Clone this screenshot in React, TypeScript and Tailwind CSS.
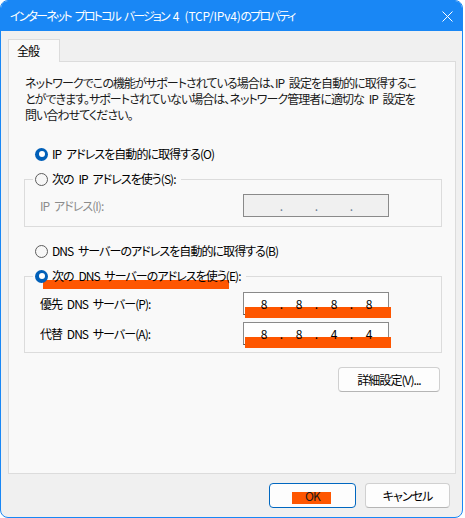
import React from "react";

const font = "font-['Noto_Sans_CJK_JP','Noto_Sans',sans-serif] [font-feature-settings:'palt']";

const Radio = ({ on }: { on?: boolean }) =>
  on ? (
    <span className="w-[13px] h-[13px] rounded-full bg-[#005fb8] flex items-center justify-center shrink-0">
      <span className="w-[6px] h-[6px] rounded-full bg-white" />
    </span>
  ) : (
    <span className="w-[13px] h-[13px] rounded-full border border-[#5d5d5d] bg-[#f7f7f7] shrink-0" />
  );

const IpBox = ({ values, disabled, mark }: { values: string[]; disabled?: boolean; mark?: boolean }) => (
  <div
    className={
      "relative w-[146px] h-[23px] border flex items-center pl-[5px] tracking-normal " +
      (disabled ? "bg-[#f0f0f0] border-[#8a8a8a]" : "bg-white border-[#8a8a8a] border-b-[#555]")
    }
  >
    {mark && <span className="absolute left-[1px] top-[14px] w-[146px] h-[11px] bg-[#fe5600]" />}
    {values.map((v, i) => (
      <React.Fragment key={i}>
        {i > 0 && (
          <span className={"relative w-[5px] text-center " + (disabled ? "text-[#6b7d95]" : "text-black")}>.</span>
        )}
        <span className="relative w-[30px] text-center text-[12px]">{v}</span>
      </React.Fragment>
    ))}
  </div>
);

export default function App() {
  return (
    <div
      className={
        "w-[465px] h-[518px] bg-white text-[12px] leading-[16px] tracking-[-0.95px] [word-spacing:3px] text-black " + font
      }
    >
      <div className="w-[463px] h-[518px] border border-[#1987f5] rounded-[8px] overflow-hidden bg-[#f0f0f0] flex flex-col">
        {/* title bar */}
        <div className="h-[30px] bg-[#1987f5] flex items-center justify-between pl-[9px] pr-[8px] text-white">
          <span className="tracking-[-1.85px] whitespace-nowrap">
            インターネット プロトコル バージョン <span className="tracking-[-0.2px]">4 (TCP/IPv4)</span>のプロパティ
          </span>
          <svg width="11" height="11" viewBox="0 0 11 11" className="mr-[1px]">
            <path d="M0.5 0.5L10.5 10.5M10.5 0.5L0.5 10.5" stroke="white" strokeWidth="1" />
          </svg>
        </div>

        <div className="px-[7px] pt-[8px] flex flex-col">
          {/* tab */}
          <div className="relative z-10 w-[52px] h-[23px] border border-b-0 border-[#dcdcdc] bg-[#f9f9f9] flex items-center pl-[8px] -mb-px">
            全般
          </div>

          {/* panel */}
          <div className="w-[448px] h-[413px] border border-[#dcdcdc] bg-[#f9f9f9] px-[15px] pt-[13px]">
            <p className="ml-[1px] text-[#1a1a1a] whitespace-nowrap">
              ネットワークでこの機能がサポートされている場合は、IP 設定を自動的に取得するこ
              <br />
              とができます。サポートされていない場合は、ネットワーク管理者に適切な IP 設定を
              <br />
              問い合わせてください。
            </p>

            <div className="mt-[23px] ml-[11px] flex items-center gap-[4px]">
              <Radio on />
              <span>IP アドレスを自動的に取得する(O)</span>
            </div>

            <fieldset className="w-[418px] border border-[#dcdcdc] mt-[9px] pb-[9px]">
              <legend className="ml-[8px] pl-[2px] pr-[5px] flex items-center gap-[4px]">
                <Radio />
                <span>次の IP アドレスを使う(S):</span>
              </legend>
              <div className="mt-[7px] flex items-center justify-between pl-[15px] pr-[52px]">
                <span className="text-[#8c8c8c]">IP アドレス(I):</span>
                <IpBox values={["", "", "", ""]} disabled />
              </div>
            </fieldset>

            <div className="mt-[16px] ml-[11px] flex items-center gap-[4px]">
              <Radio />
              <span>DNS サーバーのアドレスを自動的に取得する(B)</span>
            </div>

            <fieldset className="w-[418px] border border-[#dcdcdc] mt-[9px] pb-[7px]">
              <legend className="relative ml-[8px] pl-[2px] pr-[5px] flex items-center gap-[4px]">
                <span className="absolute left-[10px] top-[12px] w-[186px] h-[9px] bg-[#fe5600]" />
                <span className="relative">
                  <Radio on />
                </span>
                <span className="relative">次の DNS サーバーのアドレスを使う(E):</span>
              </legend>
              <div className="mt-[8px] flex items-center justify-between pl-[15px] pr-[52px]">
                <span>優先 DNS サーバー(P):</span>
                <IpBox values={["8", "8", "8", "8"]} mark />
              </div>
              <div className="mt-[7px] flex items-center justify-between pl-[15px] pr-[52px]">
                <span>代替 DNS サーバー(A):</span>
                <IpBox values={["8", "8", "4", "4"]} mark />
              </div>
            </fieldset>

            <div className="flex justify-end w-[418px] pr-[2px] mt-[14px]">
              <button className="w-[102px] h-[25px] rounded-[4px] border border-[#d0d0d0] border-b-[#b5b5b5] bg-[#fdfdfd]">
                詳細設定(V)...
              </button>
            </div>
          </div>

          {/* footer buttons */}
          <div className="flex justify-end gap-[9px] pr-[5px] mt-[9px]">
            <button className="relative w-[87px] h-[25px] rounded-[4px] border border-[#0067c0] bg-[#fdfdfd] flex items-center justify-center">
              <span className="absolute left-[22px] top-[8px] w-[39px] h-[12px] bg-[#fe5600]" />
              <span className="relative text-[#1a1a1a]">OK</span>
            </button>
            <button className="w-[85px] h-[25px] rounded-[4px] border border-[#d0d0d0] border-b-[#b5b5b5] bg-[#fdfdfd]">
              キャンセル
            </button>
          </div>
        </div>
      </div>
    </div>
  );
}
